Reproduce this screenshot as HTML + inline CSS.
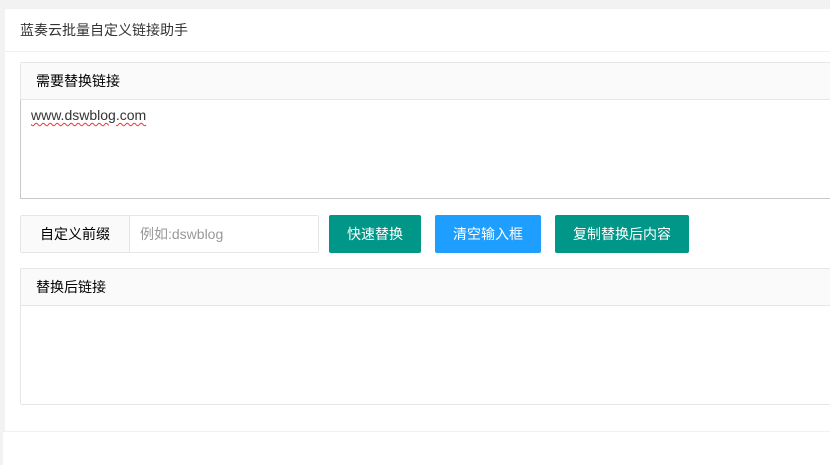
<!DOCTYPE html>
<html><head><meta charset="utf-8"><style>
*{box-sizing:border-box;margin:0;padding:0}
body{width:830px;height:465px;background:#f2f2f2;font-family:"Liberation Sans","Noto Sans CJK SC",sans-serif;font-size:14px;color:#333;position:relative;overflow:hidden}
.white{position:absolute;left:3px;top:432px;width:827px;height:33px;background:#fff}
.card{position:absolute;left:5px;top:9px;width:830px;height:422px;background:#fff;border-radius:2px}
.title{position:absolute;left:0;top:0;width:100%;height:43px;border-bottom:1px solid #f0f0f0;padding-left:15px;line-height:42px;font-size:14px;color:#333}
.panel{position:absolute;left:15px;width:820px;border:1px solid #e6e6e6;border-radius:2px}
.ph{height:37px;background:#fafafa;border-bottom:1px solid #e6e6e6;line-height:36px;padding-left:15px;color:#000}
.ta{height:99px;border:1px solid #c9c9c9;border-top:none;margin:0 -1px;padding:7px 10px;color:#333;font-size:14px}
.ta span{text-decoration:underline wavy #e33;text-decoration-thickness:1px;text-underline-offset:2px}
.lab{position:absolute;left:15px;top:206px;width:110px;height:38px;border:1px solid #e6e6e6;background:#fafafa;text-align:center;line-height:36px;color:#000;border-radius:2px 0 0 2px}
.inp{position:absolute;left:124px;top:206px;width:190px;height:38px;border:1px solid #e6e6e6;line-height:36px;padding-left:10px;color:#999;border-radius:0 2px 2px 0}
.btn{position:absolute;top:206px;height:38px;line-height:38px;color:#fff;text-align:center;border-radius:2px}
</style></head><body>
<div class="white"></div>
<div class="card">
<div class="title">蓝奏云批量自定义链接助手</div>
<div class="panel" style="top:53px;border-bottom:none"><div class="ph">需要替换链接</div><div class="ta"><span>www.dswblog.com</span></div></div>
<div class="lab">自定义前缀</div>
<div class="inp">例如:dswblog</div>
<div class="btn" style="left:324px;width:92px;background:#009688">快速替换</div>
<div class="btn" style="left:430px;width:106px;background:#1E9FFF">清空输入框</div>
<div class="btn" style="left:550px;width:134px;background:#009688">复制替换后内容</div>
<div class="panel" style="top:259px;height:137px"><div class="ph">替换后链接</div></div>
</div>
</body></html>
